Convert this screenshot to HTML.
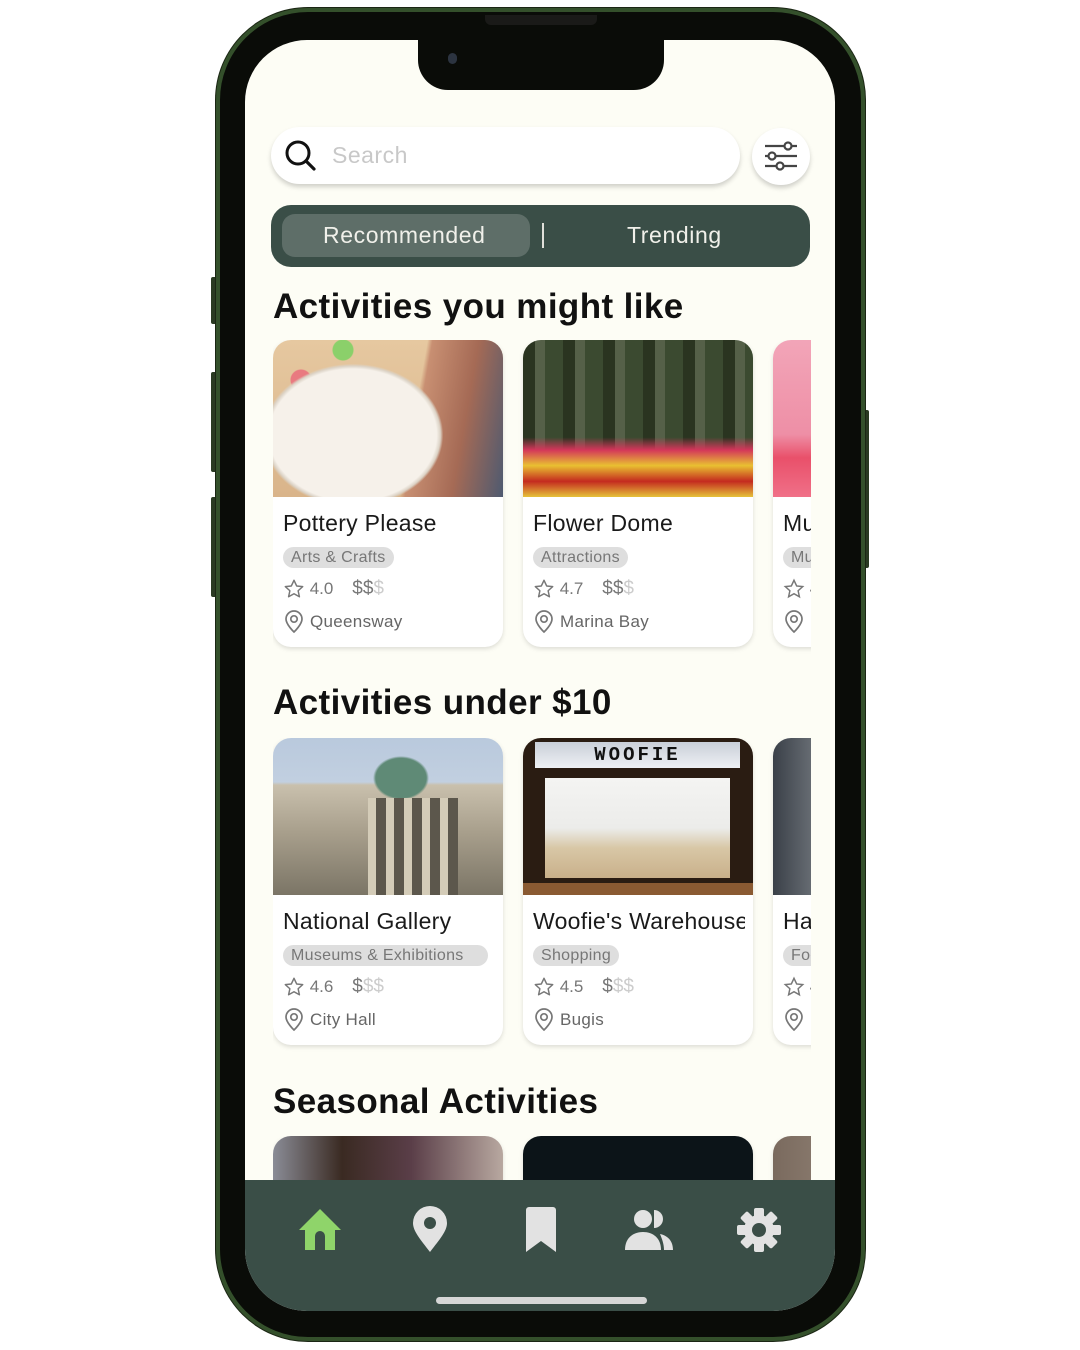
<!DOCTYPE html>
<html><head><meta charset="utf-8">
<style>
*{margin:0;padding:0;box-sizing:border-box}
html,body{width:1080px;height:1350px;background:#fff;overflow:hidden;font-family:"Liberation Sans",sans-serif;position:relative}
.abs{position:absolute}
#frame{left:216px;top:8px;width:649px;height:1333px;border-radius:92px;background:#0a0c08;border:4px solid #34502b;box-shadow:0 0 0 1px #1b2614}
#screen{left:245px;top:40px;width:590px;height:1271px;border-radius:62px;background:#fdfdf5;overflow:hidden}
.btn{background:#2a3a22;border-radius:2px}
#notch{left:173px;top:-2px;width:246px;height:52px;background:#0a0c08;border-radius:0 0 30px 30px}
.search{left:26px;top:87px;width:469px;height:57px;border-radius:29px;background:#fff;box-shadow:0 3px 5px rgba(0,0,0,.18)}
.filt{left:507px;top:88px;width:58px;height:57px;border-radius:50%;background:#fff;box-shadow:0 3px 5px rgba(0,0,0,.18)}
.seg{left:26px;top:165px;width:539px;height:62px;border-radius:20px;background:#3a4e47}
.pill{left:11px;top:9px;width:248px;height:43px;border-radius:13px;background:#5e6e68}
.segt{color:#f0f0ea;font-size:23px;top:17px;letter-spacing:.6px}
h2{position:absolute;left:28px;font-size:35px;font-weight:bold;color:#111;letter-spacing:.4px}
.row{position:absolute;left:28px;width:538px;height:320px;overflow:hidden}
.card{position:absolute;top:0;width:230px;height:307px;border-radius:18px;background:#fff;box-shadow:0 2px 5px rgba(0,0,0,.13);overflow:hidden}
.img{position:absolute;left:0;top:0;width:230px;height:157px}
.t{position:absolute;left:10px;top:170px;font-size:23px;color:#1a1a1a;white-space:nowrap;letter-spacing:.3px}
.tag{position:absolute;left:10px;top:207px;height:21px;padding:0 8px;border-radius:11px;background:#dedede;color:#777;font-size:16px;line-height:21px;white-space:nowrap;letter-spacing:.3px}
.r{position:absolute;left:10px;top:238px;font-size:17px;color:#777;white-space:nowrap;display:flex;align-items:center}
.l{position:absolute;left:10px;top:270px;font-size:17px;color:#666;white-space:nowrap;display:flex;align-items:center;letter-spacing:.3px}
.nav{left:0;top:1140px;width:590px;height:131px;background:#3a4e47}
.home{left:191px;top:1257px;width:211px;height:7px;border-radius:4px;background:#d6d6d6}
</style></head><body>
<div class="abs btn" style="left:211px;top:277px;width:6px;height:47px"></div>
<div class="abs btn" style="left:211px;top:372px;width:6px;height:100px"></div>
<div class="abs btn" style="left:211px;top:497px;width:6px;height:100px"></div>
<div class="abs btn" style="left:863px;top:410px;width:6px;height:158px"></div>
<div id="frame" class="abs"></div>
<div class="abs" style="left:485px;top:15px;width:112px;height:10px;background:#1a1a18;border-radius:0 0 6px 6px"></div>
<div id="screen" class="abs">
  <div id="notch" class="abs"></div>
  <div class="abs" style="left:203px;top:13px;width:9px;height:11px;border-radius:5px;background:#2c3440"></div>

  <div class="abs search">
    <svg class="abs" style="left:13px;top:12px" width="34" height="34" viewBox="0 0 34 34"><circle cx="14" cy="14" r="11" fill="none" stroke="#111" stroke-width="3"/><path d="M22 22l8 8" stroke="#111" stroke-width="3.2" stroke-linecap="round"/></svg>
    <div class="abs" style="left:61px;top:15px;font-size:23px;color:#c8c8c8;letter-spacing:.5px">Search</div>
  </div>
  <div class="abs filt">
    <svg class="abs" style="left:11px;top:10px" width="36" height="36" viewBox="0 0 36 36" fill="none" stroke="#444" stroke-width="2.2"><path d="M2 8h32M2 18h32M2 28h32"/><circle cx="25" cy="8" r="3.5" fill="#fff"/><circle cx="9" cy="18" r="3.5" fill="#fff"/><circle cx="17" cy="28" r="3.5" fill="#fff"/></svg>
  </div>

  <div class="abs seg">
    <div class="abs pill"></div>
    <div class="abs segt" style="left:52px">Recommended</div>
    <div class="abs" style="left:271px;top:18px;width:2px;height:25px;background:#e0e0da"></div>
    <div class="abs segt" style="left:356px">Trending</div>
  </div>

  <h2 style="top:247px">Activities you might like</h2>
  <div class="row" style="top:300px">
    <div class="card" style="left:0">
      <div class="img" style="background:radial-gradient(ellipse 95px 75px at 80px 95px,#f6f1ea 0 88%,#dcd3c6 92%,transparent 95%),radial-gradient(circle at 28px 40px,#e97a80 0 10px,transparent 11px),radial-gradient(circle at 70px 10px,#8bd06a 0 10px,transparent 11px),linear-gradient(100deg,transparent 60%,#c88f72 62%,#a56a55 80%,#4e5a70 100%),linear-gradient(180deg,#e6c8a0,#d9b48a)"></div>
      <div class="t">Pottery Please</div><div class="tag">Arts &amp; Crafts</div>
      <div class="r"><svg width="22" height="22" viewBox="0 0 24 24"><path d="M12 2.5l2.9 6.2 6.6.7-5 4.5 1.4 6.6L12 17.2l-5.9 3.3 1.4-6.6-5-4.5 6.6-.7z" fill="none" stroke="#777" stroke-width="1.6" stroke-linejoin="round"/></svg>&nbsp;4.0&nbsp;&nbsp;&nbsp;&nbsp;<span style="color:#777;font-size:19px">$$</span><span style="color:#ccc;font-size:19px">$</span></div>
      <div class="l"><svg width="22" height="24" viewBox="0 0 22 24"><path d="M11 22s-8-7.5-8-13a8 8 0 0116 0c0 5.5-8 13-8 13z" fill="none" stroke="#777" stroke-width="1.7"/><circle cx="11" cy="9" r="3.2" fill="none" stroke="#777" stroke-width="1.7"/></svg>&nbsp;Queensway</div>
    </div>
    <div class="card" style="left:250px">
      <div class="img" style="background:linear-gradient(180deg,transparent 0,transparent 62%,#d3365a 70%,#e9c031 80%,#c42a1f 90%,#e6c23a 100%),repeating-linear-gradient(90deg,#2a3420 0 12px,#556048 12px 22px,#3b4a30 22px 40px),linear-gradient(180deg,#c5cabe,#3d4a2d)"></div>
      <div class="t">Flower Dome</div><div class="tag">Attractions</div>
      <div class="r"><svg width="22" height="22" viewBox="0 0 24 24"><path d="M12 2.5l2.9 6.2 6.6.7-5 4.5 1.4 6.6L12 17.2l-5.9 3.3 1.4-6.6-5-4.5 6.6-.7z" fill="none" stroke="#777" stroke-width="1.6" stroke-linejoin="round"/></svg>&nbsp;4.7&nbsp;&nbsp;&nbsp;&nbsp;<span style="color:#777;font-size:19px">$$</span><span style="color:#ccc;font-size:19px">$</span></div>
      <div class="l"><svg width="22" height="24" viewBox="0 0 22 24"><path d="M11 22s-8-7.5-8-13a8 8 0 0116 0c0 5.5-8 13-8 13z" fill="none" stroke="#777" stroke-width="1.7"/><circle cx="11" cy="9" r="3.2" fill="none" stroke="#777" stroke-width="1.7"/></svg>&nbsp;Marina Bay</div>
    </div>
    <div class="card" style="left:500px">
      <div class="img" style="background:linear-gradient(180deg,#f2a5b8 0,#ee8fa6 60%,#e9506a 75%,#f07088 100%)"></div>
      <div class="t">Museum</div><div class="tag">Museums</div>
      <div class="r"><svg width="22" height="22" viewBox="0 0 24 24"><path d="M12 2.5l2.9 6.2 6.6.7-5 4.5 1.4 6.6L12 17.2l-5.9 3.3 1.4-6.6-5-4.5 6.6-.7z" fill="none" stroke="#777" stroke-width="1.6"/></svg>&nbsp;4.5</div>
      <div class="l"><svg width="22" height="24" viewBox="0 0 22 24"><path d="M11 22s-8-7.5-8-13a8 8 0 0116 0c0 5.5-8 13-8 13z" fill="none" stroke="#777" stroke-width="1.7"/><circle cx="11" cy="9" r="3.2" fill="none" stroke="#777" stroke-width="1.7"/></svg>&nbsp;Bugis</div>
    </div>
  </div>

  <h2 style="top:643px">Activities under $10</h2>
  <div class="row" style="top:698px">
    <div class="card" style="left:0">
      <div class="img" style="background:radial-gradient(ellipse 28px 22px at 128px 40px,#5f8a76 0 90%,transparent 100%),linear-gradient(180deg,transparent 0,transparent 28%,#c9c0ad 30%,#a89f8c 60%,#7b7566 100%),linear-gradient(180deg,#b9c9dd,#d8e0e8)"><div class="abs" style="left:95px;top:60px;width:90px;height:97px;background:repeating-linear-gradient(90deg,#d4ccb8 0 8px,#5c574c 8px 18px)"></div></div>
      <div class="t">National Gallery</div><div class="tag" style="width:205px;overflow:hidden">Museums &amp; Exhibitions</div>
      <div class="r"><svg width="22" height="22" viewBox="0 0 24 24"><path d="M12 2.5l2.9 6.2 6.6.7-5 4.5 1.4 6.6L12 17.2l-5.9 3.3 1.4-6.6-5-4.5 6.6-.7z" fill="none" stroke="#777" stroke-width="1.6" stroke-linejoin="round"/></svg>&nbsp;4.6&nbsp;&nbsp;&nbsp;&nbsp;<span style="color:#777;font-size:19px">$</span><span style="color:#ccc;font-size:19px">$$</span></div>
      <div class="l"><svg width="22" height="24" viewBox="0 0 22 24"><path d="M11 22s-8-7.5-8-13a8 8 0 0116 0c0 5.5-8 13-8 13z" fill="none" stroke="#777" stroke-width="1.7"/><circle cx="11" cy="9" r="3.2" fill="none" stroke="#777" stroke-width="1.7"/></svg>&nbsp;City Hall</div>
    </div>
    <div class="card" style="left:250px">
      <div class="img" style="background:#2a1c12">
        <div class="abs" style="left:12px;top:4px;width:205px;height:26px;background:linear-gradient(#c9cfd8,#eef0f4);color:#111;font:bold 19px 'Liberation Mono',monospace;text-align:center;letter-spacing:3px;line-height:26px">WOOFIE</div>
        <div class="abs" style="left:22px;top:40px;width:185px;height:100px;background:linear-gradient(180deg,#f4f4f2 0,#ececea 50%,#d8c7a6 70%,#c9b08a 100%)"></div>
        <div class="abs" style="left:0;top:145px;width:230px;height:12px;background:#8a5a32"></div>
      </div>
      <div class="t" style="width:212px;overflow:hidden">Woofie's Warehouse</div><div class="tag">Shopping</div>
      <div class="r"><svg width="22" height="22" viewBox="0 0 24 24"><path d="M12 2.5l2.9 6.2 6.6.7-5 4.5 1.4 6.6L12 17.2l-5.9 3.3 1.4-6.6-5-4.5 6.6-.7z" fill="none" stroke="#777" stroke-width="1.6" stroke-linejoin="round"/></svg>&nbsp;4.5&nbsp;&nbsp;&nbsp;&nbsp;<span style="color:#777;font-size:19px">$</span><span style="color:#ccc;font-size:19px">$$</span></div>
      <div class="l"><svg width="22" height="24" viewBox="0 0 22 24"><path d="M11 22s-8-7.5-8-13a8 8 0 0116 0c0 5.5-8 13-8 13z" fill="none" stroke="#777" stroke-width="1.7"/><circle cx="11" cy="9" r="3.2" fill="none" stroke="#777" stroke-width="1.7"/></svg>&nbsp;Bugis</div>
    </div>
    <div class="card" style="left:500px">
      <div class="img" style="background:linear-gradient(90deg,#3a4048,#d9dde0 60%,#3a3430)"></div>
      <div class="t">Hawker</div><div class="tag">Food</div>
      <div class="r"><svg width="22" height="22" viewBox="0 0 24 24"><path d="M12 2.5l2.9 6.2 6.6.7-5 4.5 1.4 6.6L12 17.2l-5.9 3.3 1.4-6.6-5-4.5 6.6-.7z" fill="none" stroke="#777" stroke-width="1.6"/></svg>&nbsp;4.5</div>
      <div class="l"><svg width="22" height="24" viewBox="0 0 22 24"><path d="M11 22s-8-7.5-8-13a8 8 0 0116 0c0 5.5-8 13-8 13z" fill="none" stroke="#777" stroke-width="1.7"/><circle cx="11" cy="9" r="3.2" fill="none" stroke="#777" stroke-width="1.7"/></svg>&nbsp;Bugis</div>
    </div>
  </div>

  <h2 style="top:1042px">Seasonal Activities</h2>
  <div class="row" style="top:1096px;height:44px">
    <div class="card" style="left:0"><div class="img" style="background:linear-gradient(90deg,#8a8c96,#3a2a22 30%,#5a3e48 60%,#b8a8a0)"></div></div>
    <div class="card" style="left:250px"><div class="img" style="background:#0c1418"></div></div>
    <div class="card" style="left:500px"><div class="img" style="background:linear-gradient(90deg,#7a6a5e,#c0b4a6)"></div></div>
  </div>

  <div class="abs nav">
    <svg class="abs" style="left:51px;top:26px" width="48" height="48" viewBox="0 0 48 48"><path d="M24 3L3 24h6v20h10V30a5 5 0 0110 0v14h10V24h6z" fill="#8fd46a"/></svg>
    <svg class="abs" style="left:165px;top:26px" width="40" height="48" viewBox="0 0 40 48"><path d="M20 46C10 33 3 25 3 17a17 17 0 0134 0c0 8-7 16-17 29z" fill="#e2e2e2"/><circle cx="20" cy="17" r="6" fill="#3a4e47"/></svg>
    <svg class="abs" style="left:278px;top:27px" width="36" height="46" viewBox="0 0 36 46"><path d="M3 3a3 3 0 013-3h24a3 3 0 013 3v42L18 34 3 45z" fill="#e2e2e2"/></svg>
    <svg class="abs" style="left:378px;top:28px" width="54" height="44" viewBox="0 0 54 44"><circle cx="20" cy="11" r="9" fill="#e2e2e2"/><path d="M2 42c0-12 8-18 18-18s18 6 18 18z" fill="#e2e2e2"/><path d="M31 2a9 9 0 010 18" fill="#e2e2e2"/><path d="M37 26c9 2 13 8 13 16h-9c0-6-2-11-4-16z" fill="#e2e2e2"/></svg>
    <svg class="abs" style="left:490px;top:26px" width="48" height="48" viewBox="0 0 48 48"><g fill="#e2e2e2"><circle cx="24" cy="24" r="15"/><rect x="19" y="2" width="10" height="44" rx="2"/><rect x="19" y="2" width="10" height="44" rx="2" transform="rotate(45 24 24)"/><rect x="19" y="2" width="10" height="44" rx="2" transform="rotate(90 24 24)"/><rect x="19" y="2" width="10" height="44" rx="2" transform="rotate(135 24 24)"/></g><circle cx="24" cy="24" r="7" fill="#3a4e47"/></svg>
  </div>
  <div class="abs home"></div>
</div>
</body></html>
